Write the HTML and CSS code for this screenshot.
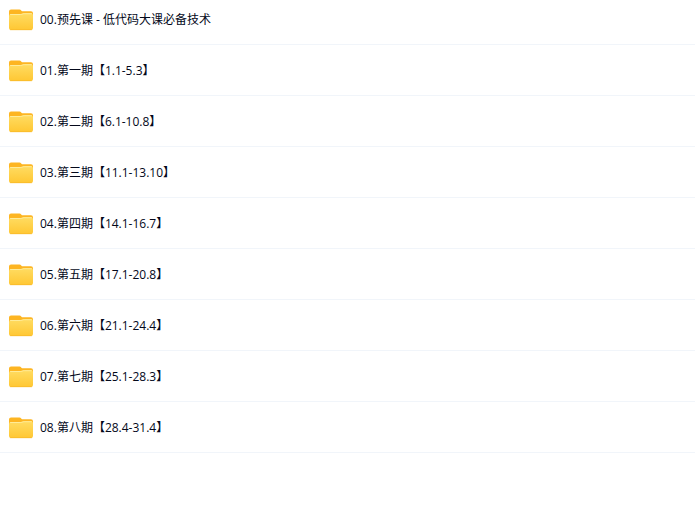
FILE: index.html
```html
<!DOCTYPE html>
<html lang="zh-CN">

<head>
    <meta charset="UTF-8">
    <meta name="viewport" content="width=device-width, initial-scale=1.0">
    <title>低代码大课</title>
    <link rel="stylesheet" href="styles.css">
</head>

<body>

    <svg class="sprite" aria-hidden="true">
        <defs>
            <linearGradient id="folder-front" x1="0" y1="0" x2="0" y2="1">
                <stop offset="0" stop-color="#ffdc62"/>
                <stop offset="1" stop-color="#ffc733"/>
            </linearGradient>
            <symbol id="folder" viewBox="0 0 24 22">
                <path fill="#fdb522" d="M2 .5h8.500c.8 0 1.200.3 1.700.9l.8.9H22a2 2 0 0 1 2 2V12H0V2.500a2 2 0 0 1 2-2z"/>
                <path fill="url(#folder-front)" d="M2 5h9.500c.8 0 1.200-.1 1.900-.4.6-.3 1-.4 1.700-.4H22a2 2 0 0 1 2 2V19a2 2 0 0 1-2 2H2a2 2 0 0 1-2-2V7a2 2 0 0 1 2-2z"/>
                <path fill="none" stroke="#fff0a8" stroke-width=".8" stroke-linecap="round" d="M1.500 5.500h10c.8 0 1.200-.1 1.900-.4.6-.3 1-.4 1.700-.4h7.400"/>
                <path fill="none" stroke="#f8b928" stroke-width=".8" stroke-linecap="round" d="M1.500 20.700h21"/>
            </symbol>
        </defs>
    </svg>

    <ul class="file-list">
        <li class="file-item"><svg class="icon"><use href="#folder"/></svg><span class="name">00.预先课 - 低代码大课必备技术</span></li>
        <li class="file-item"><svg class="icon"><use href="#folder"/></svg><span class="name">01.第一期【1.1-5.3】</span></li>
        <li class="file-item"><svg class="icon"><use href="#folder"/></svg><span class="name">02.第二期【6.1-10.8】</span></li>
        <li class="file-item"><svg class="icon"><use href="#folder"/></svg><span class="name">03.第三期【11.1-13.10】</span></li>
        <li class="file-item"><svg class="icon"><use href="#folder"/></svg><span class="name">04.第四期【14.1-16.7】</span></li>
        <li class="file-item"><svg class="icon"><use href="#folder"/></svg><span class="name">05.第五期【17.1-20.8】</span></li>
        <li class="file-item"><svg class="icon"><use href="#folder"/></svg><span class="name">06.第六期【21.1-24.4】</span></li>
        <li class="file-item"><svg class="icon"><use href="#folder"/></svg><span class="name">07.第七期【25.1-28.3】</span></li>
        <li class="file-item"><svg class="icon"><use href="#folder"/></svg><span class="name">08.第八期【28.4-31.4】</span></li>
    </ul>

</body>

</html>
```

FILE: styles.css
```css
body {
    margin: 0;
    background-color: #fff;
    color: #03081a;
    font-family: "Open Sans", "Noto Sans CJK SC", sans-serif;
    font-size: 12px;
    line-height: 20px;
}

.sprite {
    position: absolute;
    width: 0;
    height: 0;
}

/* the list is scrolled a little, so the first row is cut at the top */
.file-list {
    list-style: none;
    margin: -6px 0 0;
    padding: 0;
}

.file-item {
    display: flex;
    align-items: center;
    gap: 7px;
    padding: 15px 9px 13px;
    border-bottom: 1px solid #f1f5fa;
}

.icon {
    flex: none;
    width: 24px;
    height: 22px;
}
```
